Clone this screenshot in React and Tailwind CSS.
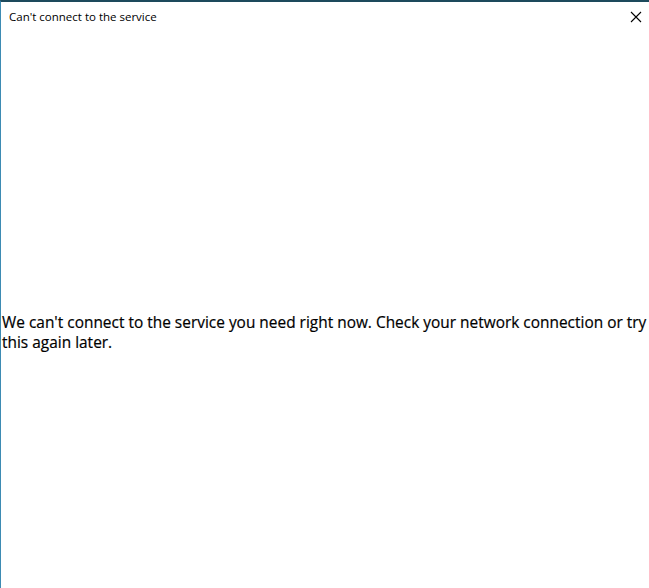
import React from 'react';

const CloseIcon = () => (
  <svg width="12" height="12" viewBox="0 0 12 12" className="text-black">
    <path d="M1 1 L11 11 M11 1 L1 11" stroke="currentColor" strokeWidth="1.1" fill="none" />
  </svg>
);

export default function App() {
  return (
    <div className="w-[649px] h-[588px] bg-white border-t-2 border-t-[#1d4a5c] border-l border-l-[#3d8bb3] flex flex-col overflow-hidden" style={{ fontFamily: '"Open Sans", "Noto Sans", sans-serif' }}>
      <div className="h-[30px] flex items-center justify-between pl-[8px] pr-[3px]">
        <span className="text-[11.5px] text-black">Can't connect to the service</span>
        <button className="w-[20px] h-[20px] flex items-center justify-center">
          <CloseIcon />
        </button>
      </div>
      <div className="flex-1 flex flex-col pt-[281px] pl-[1px]">
        <p className="text-[15.4px] tracking-[0.02px] leading-[20px] text-black [-webkit-text-stroke:0.2px_black]">
          We can't connect to the service you need right now. Check your network connection or try this again later.
        </p>
      </div>
    </div>
  );
}
